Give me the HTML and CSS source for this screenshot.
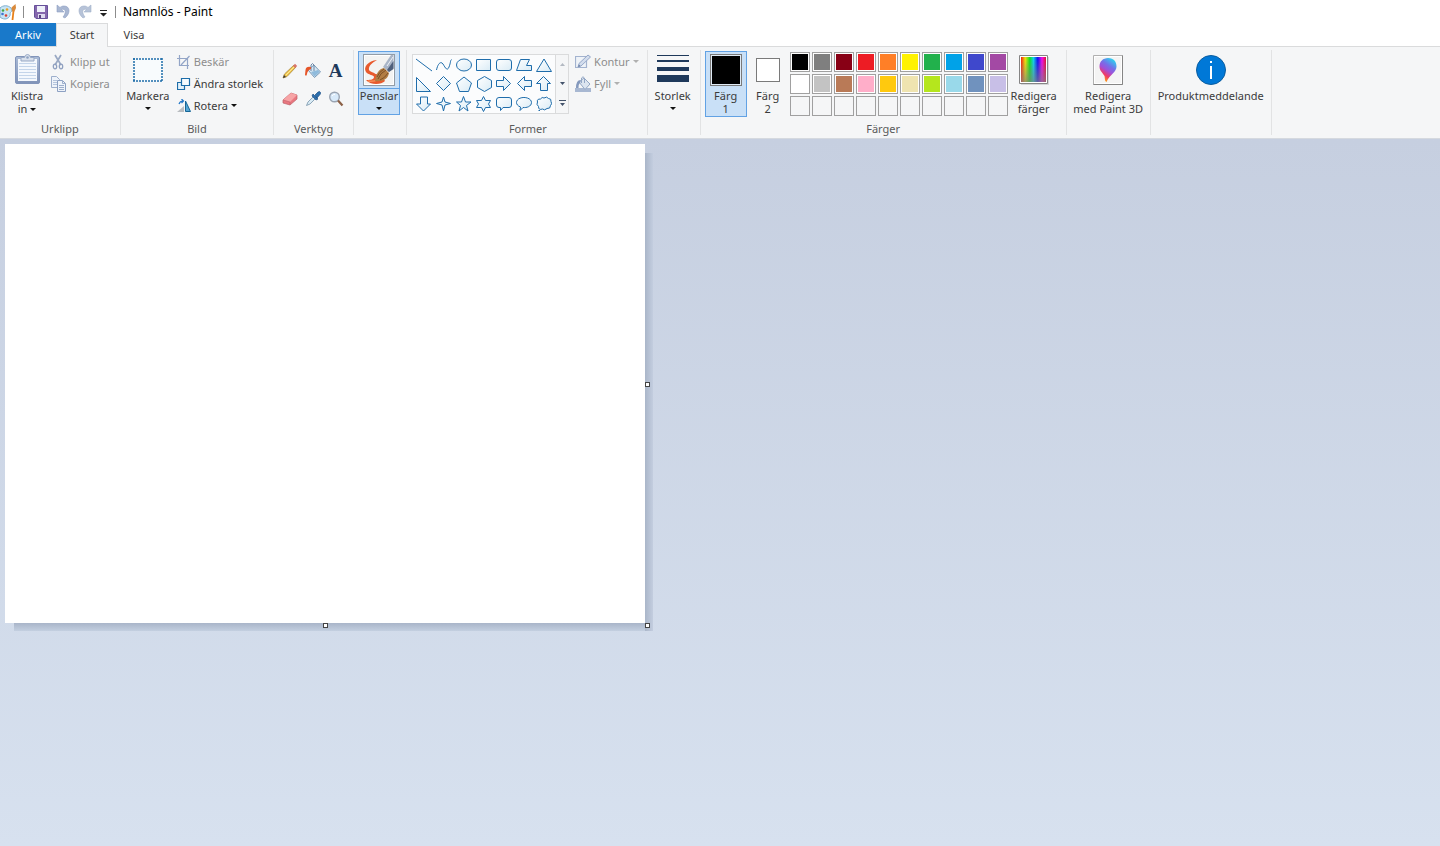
FILE: index.html
```html
<!DOCTYPE html>
<html lang="sv">
<head>
<meta charset="utf-8">
<title>Namnlös - Paint</title>
<link rel="stylesheet" href="styles.css">
</head>
<body>
<svg class="defs" aria-hidden="true">
  <defs>
    <linearGradient id="shapeFill" x1="0" y1="0" x2="1" y2="1"><stop offset="0" stop-color="#fff"/><stop offset="1" stop-color="#d9ebf5"/></linearGradient>
    <linearGradient id="steel" x1="0" y1="0" x2="0" y2="1"><stop offset="0" stop-color="#a9bad6"/><stop offset="1" stop-color="#8093b8"/></linearGradient>
    <linearGradient id="rainbow" x1="0" y1="0" x2="1" y2="0"><stop offset="0" stop-color="#f02010"/><stop offset=".17" stop-color="#f0e010"/><stop offset=".35" stop-color="#10e020"/><stop offset=".5" stop-color="#10d0e8"/><stop offset=".67" stop-color="#1010f0"/><stop offset=".84" stop-color="#f010e8"/><stop offset="1" stop-color="#e01030"/></linearGradient>
    <linearGradient id="greyfade" x1="0" y1="0" x2="0" y2="1"><stop offset=".1" stop-color="#808080" stop-opacity="0"/><stop offset="1" stop-color="#808080" stop-opacity=".7"/></linearGradient>
    <linearGradient id="drop" x1=".8" y1="0" x2=".3" y2="1"><stop offset="0" stop-color="#20e0f0"/><stop offset=".35" stop-color="#7470e8"/><stop offset=".55" stop-color="#a050d8"/><stop offset=".75" stop-color="#f03868"/><stop offset="1" stop-color="#ffb000"/></linearGradient>
  </defs>
</svg>

<header class="titlebar">
  <svg class="app" width="17" height="18" viewBox="0 0 17 18"><path d="M0 5C3 2 8 2 11 5c2 3 0 4-1 5 1 3-2 6-5 6-2 0-4-1-5-2z" fill="#c8e4f4" stroke="#7fb0d0"/><circle cx="3" cy="7.500" r="1.300" fill="#45a648"/><circle cx="7" cy="6.500" r="1.300" fill="#e8a020"/><circle cx="2.500" cy="11" r="1.300" fill="#3f75d0"/><circle cx="6" cy="12.500" r="1.300" fill="#d84030"/><path d="M12.500 17l1-9" stroke="#e88018" stroke-width="1.800" fill="none"/><path d="M12 8.500l-.5-4L15.500 1l.5 4-1.500 3.500z" fill="#d98a3c"/></svg>
  <span class="rule"></span>
  <button class="quick" aria-label="Spara"><svg width="14" height="14" viewBox="0 0 14 14"><path d="M.5.500h13v13H2L.5 12z" fill="#8567ad" stroke="#66509a"/><path d="M3 1h8v6H3z" fill="#eef0fa"/><path d="M4 9h7v4H4z" fill="#ddd9ee"/><path d="M5 10h2v3H5z" fill="#55417e"/></svg></button>
  <button class="quick" aria-label="Ångra"><svg width="14" height="15" viewBox="0 0 14 15"><path d="M1 1v7h7L5.500 5.500C9 4 11 8 7 13l2 1c6-5 5-12-1-12-2 0-3 .6-4 1.500z" fill="#a9b7d2" stroke="#8fa0c3" stroke-width=".6"/></svg></button>
  <button class="quick" aria-label="Gör om"><svg width="14" height="15" viewBox="0 0 14 15"><path d="M13 1v7H6l2.500-2.500C5 4 3 8 7 13l-2 1C-1 9 0 2 6 2c2 0 3 .6 4 1.500z" fill="#b7c3d8" stroke="#a3b1cb" stroke-width=".6"/></svg></button>
  <button class="customize" aria-label="Anpassa verktygsfältet Snabbåtkomst"><svg width="7" height="7" viewBox="0 0 7 7"><path d="M0 0h7v1H0zM0 3h7L3.500 6.500z" fill="#222"/></svg></button>
  <span class="rule"></span>
  <h1 class="title">Namnlös - Paint</h1>
</header>

<nav class="tabs">
  <button class="tab file">Arkiv</button>
  <button class="tab active">Start</button>
  <button class="tab">Visa</button>
</nav>

<div class="ribbon">
  <section class="group">
    <div class="body">
      <button class="big paste"><span class="pic"><svg width="28" height="32" viewBox="-1 0 28 32"><rect x="1.500" y="2.500" width="24" height="27" rx="1.500" fill="url(#steel)" stroke="#8295ba"/><path d="M4 5h19v22H4z" fill="#f4f8fd"/><path d="M5 9.500h17M5 12.500h17M5 15.500h17M5 18.500h17M5 21.500h17M5 24.500h17" stroke="#c4d5ea"/><path d="M7 7V3.500h3.500Q11 .5 13.500.500T16.500 3.500H20V7z" fill="#d8e0ec" stroke="#98a9c5"/><circle cx="13.500" cy="3.500" r="1.300" fill="#8fa3c3"/></svg></span>Klistra<br>in <i class="caret"></i></button>
      <div class="stack">
        <button class="small" disabled><svg width="16" height="16" viewBox="0 0 16 16"><path d="M4 1l6 10M10 1L4 11" stroke="#9aa9c4" stroke-width="1.700"/><ellipse cx="4" cy="12.500" rx="1.700" ry="2.300" fill="none" stroke="#8fa0c0" stroke-width="1.300"/><ellipse cx="10" cy="12.500" rx="1.700" ry="2.300" fill="none" stroke="#8fa0c0" stroke-width="1.300"/></svg>Klipp ut</button>
        <button class="small" disabled><svg width="16" height="16" viewBox="0 0 16 16"><path d="M.5.500h5l3 3v8h-8z" fill="#eef3fa" stroke="#9dafcc"/><path d="M2 4.500h4M2 6.500h4M2 8.500h4" stroke="#b4c4dc"/><path d="M6.500 4.500h5l3 3v8h-8z" fill="#eef3fa" stroke="#8da1c3"/><path d="M11.500 4.500v3h3M8 9.500h5M8 11.500h5M8 13.500h5" fill="none" stroke="#9dafcc"/></svg>Kopiera</button>
      </div>
    </div>
    <h2>Urklipp</h2>
  </section>

  <section class="group">
    <div class="body">
      <button class="big select"><span class="pic"><svg width="30" height="24" viewBox="0 0 30 24"><path d="M0 0h30v24H0z" fill="#f8fbfd"/><path d="M0 1h30M0 23h30M1 0v24M29 0v24" fill="none" stroke="#1c6ca8" stroke-width="1.500" stroke-dasharray="2 1"/></svg></span>Markera<i class="caret below"></i></button>
      <div class="stack">
        <button class="small" disabled><svg width="14" height="14" viewBox="0 0 14 14"><path d="M2.500 0v10.500H12M0 3.500h10.500V14M4 10L12.500 1" fill="none" stroke="#93a5c7" stroke-width="1.200"/></svg>Beskär</button>
        <button class="small"><svg width="14" height="14" viewBox="0 0 14 14"><path d="M.5 5.500h7v7h-7z" fill="#e4f2fb" stroke="#1d6da9" stroke-width="1.200"/><path d="M4.500 1.500h8v7h-8z" fill="#f7fcff" stroke="#1d6da9" stroke-width="1.200"/></svg>Ändra storlek</button>
        <button class="small"><svg width="14" height="14" viewBox="0 0 14 14"><path d="M0 13l7-6v6z" fill="#b9bdc1"/><path d="M8.500 2L13.500 12.500h-5z" fill="#54a5d4" stroke="#166696"/><path d="M2 5q1-3 4-3M4.500 0L6.500 2l-2 2" fill="none" stroke="#2377c8" stroke-width="1.200"/></svg>Rotera <i class="caret"></i></button>
      </div>
    </div>
    <h2>Bild</h2>
  </section>

  <section class="group">
    <div class="body tools">
      <button aria-label="Penna"><svg width="16" height="16" viewBox="0 0 16 16"><path d="M1 15l1.500-4L12 2l2 2-9 9.500z" fill="#f2c84b" stroke="#a98640" stroke-width=".8"/><path d="M11 3l2-2.200 2.200 2.200L13 5z" fill="#d8746a"/><path d="M1 15l1-3 2 2z" fill="#3c3c3c"/><path d="M4 12l8-8" stroke="#fbe69b"/></svg></button>
      <button aria-label="Fyll med färg"><svg width="18" height="16" viewBox="0 0 18 16"><path d="M4 7l6-5 6.500 7-6 5.500z" fill="#d6e6f2" stroke="#7799b8"/><path d="M7 9l7-2 1.500 2-5 4.500z" fill="#8fbbdc"/><path d="M7 8V2q1.500-3 3 0v6" fill="none" stroke="#6b87a8"/><path d="M7 4Q2 3 1.500 7L1 12q1.500 2 2-1 .5-4 4-5z" fill="#e65529"/></svg></button>
      <button class="letter" aria-label="Text">A</button>
      <button aria-label="Suddgummi"><svg width="16" height="14" viewBox="0 0 16 14"><path d="M1 8L9 1l6 2v4l-7 6-7-2z" fill="#e97780" stroke="#bd6168" stroke-width=".7"/><path d="M1 8l8-7 6 2-7 7z" fill="#f7a4a6"/><path d="M1 8l7 2v3" fill="none" stroke="#c9656e" stroke-width=".7"/></svg></button>
      <button aria-label="Färgväljare"><svg width="16" height="16" viewBox="0 0 16 16"><path d="M1.500 14.500L3 11l6-6 2 2-6 6z" fill="#d9ebf5" stroke="#7693aa" stroke-width=".8"/><path d="M8 3l5 5-2 1-4-4zM10 4l3-3q2-1 2.500.5T15 3.500L12 7z" fill="#2b6fae" stroke="#1d4f85" stroke-width=".7"/></svg></button>
      <button aria-label="Förstoringsglas"><svg width="16" height="16" viewBox="0 0 16 16"><circle cx="6.500" cy="6" r="4.800" fill="#d8eafa" stroke="#9aa4b2" stroke-width="1.400"/><path d="M10 9.500l4.500 5" stroke="#8b6046" stroke-width="2.200"/><path d="M4 5q1-2 3-1.500" fill="none" stroke="#fff"/></svg></button>
    </div>
    <h2>Verktyg</h2>
  </section>

  <section class="group">
    <div class="body">
      <button class="big brushes on"><span class="pic"><svg width="32" height="32" viewBox="0 0 32 32"><rect x=".5" y=".5" width="31" height="31" fill="#f3f3f2" stroke="#929ca6"/><path d="M1.500 1.500h29v29h-29z" fill="none" stroke="#fff"/><path d="M14 6C5 7 0 13 3 18c2 3 8 3 8 5 0 3-5 3-8 3 4 5 15 5 19 1l-5-8c-3 1-3 2-6 0-2-1-6-2-5-5 1-4 5-6 8-8z" fill="#e85a2d"/><path d="M5 27q9 1 13-4" stroke="#f58a55" fill="none" stroke-width="1.500"/><path d="M20 13L28 1h2.500v13L26 18z" fill="#a9b5c7"/><path d="M24 16l6.500-9v8L26 18z" fill="#4e607d"/><path d="M24 12l6-9" stroke="#eef2f8"/><path d="M12 27c1-8 4-12 9-13l5 5c-1 6-6 9-14 8z" fill="#b17d43"/><path d="M15 25q2-6 8-9M17 26q5-2 8-7M14 23q2-5 7-8" stroke="#7d5127" fill="none"/></svg></span>Penslar<i class="caret below"></i></button>
    </div>
  </section>

  <section class="group forms">
    <div class="body">
      <div class="gallery">
        <div class="shapes">
          <button aria-label="Linje"><svg viewBox="0 0 16 16"><path d="M0 2l16 12"/></svg></button>
          <button aria-label="Kurva"><svg viewBox="0 0 16 16"><path class="open" d="M.5 13C2 6 5 4 7 7s4 8 6 3 1-6 2.500-7.500"/></svg></button>
          <button aria-label="Ellips"><svg viewBox="0 0 16 16"><ellipse cx="8" cy="8" rx="7.500" ry="6"/></svg></button>
          <button aria-label="Rektangel"><svg viewBox="0 0 16 16"><path d="M.5 2.500h14v11H.5z"/></svg></button>
          <button aria-label="Rundad rektangel"><svg viewBox="0 0 16 16"><rect x=".5" y="2.500" width="15" height="11" rx="2.500"/></svg></button>
          <button aria-label="Polygon"><svg viewBox="0 0 16 16"><path d="M4.500 2.500h9l-3 6h5v5H.5z"/></svg></button>
          <button aria-label="Triangel"><svg viewBox="0 0 16 16"><path d="M8 2l7.500 12.500H.5z"/></svg></button>
          <button aria-label="Rätvinklig triangel"><svg viewBox="0 0 16 16"><path d="M.5 1.500l14 14H.5z"/></svg></button>
          <button aria-label="Romb"><svg viewBox="0 0 16 16"><path d="M7.500.500l7 7-7 7-7-7z"/></svg></button>
          <button aria-label="Femhörning"><svg viewBox="0 0 16 16"><path d="M8 1l7.500 6-3 8.500h-9L.5 7z"/></svg></button>
          <button aria-label="Sexhörning"><svg viewBox="0 0 16 16"><path d="M8.500.500l7 4v7l-7 4-7-4v-7z"/></svg></button>
          <button aria-label="Högerpil"><svg viewBox="0 0 16 16"><path d="M.5 4.500h7v-4l7 7-7 7v-4h-7z"/></svg></button>
          <button aria-label="Vänsterpil"><svg viewBox="0 0 16 16"><path d="M15.500 4.500h-7v-4l-7 7 7 7v-4h7z"/></svg></button>
          <button aria-label="Uppåtpil"><svg viewBox="0 0 16 16"><path d="M7.500.500l7 7h-3v7h-7v-7h-4z"/></svg></button>
          <button aria-label="Nedåtpil"><svg viewBox="0 0 16 16"><path d="M7.500 15l7-7h-3V1h-7v7h-4z"/></svg></button>
          <button aria-label="Fyruddig stjärna"><svg viewBox="0 0 16 16"><path d="M7.500 1l1.500 5 5.500 1.500L9 9l-1.500 6L6 9 .5 7.500 6 6z"/></svg></button>
          <button aria-label="Femuddig stjärna"><svg viewBox="0 0 16 16"><path d="M7.500.500l2 5.500h5.500L10.500 9.500 12 15l-4.500-3.500L3 15l1.500-5.500L.5 6h5z"/></svg></button>
          <button aria-label="Sexuddig stjärna"><svg viewBox="0 0 16 16"><path d="M7.500.500l2 4h5l-2 3.500 2 3.500h-5l-2 4-2-4h-5l2-3.500-2-3.500h5z"/></svg></button>
          <button aria-label="Rundad rektangulär pratbubbla"><svg viewBox="0 0 16 16"><path d="M3 1.500h10q2.500 0 2.500 2.500v5q0 2.500-2.500 2.500H7L4.500 14.500v-3H3Q.5 11.500.5 9V4Q.5 1.500 3 1.500z"/></svg></button>
          <button aria-label="Oval pratbubbla"><svg viewBox="0 0 16 16"><path d="M4.500 11C-1 9-.5 4 4 2.200c5-2 11.500.3 11.500 4.300s-5 5.500-8.500 5L4 14.500z"/></svg></button>
          <button aria-label="Molnbubbla"><svg viewBox="0 0 16 16"><path d="M4.500 3Q6 .5 8 2q3-2 4.500.5 3 0 2.500 3 1.500 2.500-.5 4 0 3.500-3.500 3-2.500 2.500-4.500.5-4 1.500-4-2.500-2.500-2-1-4.500Q.5 3 4.500 3zM2.500 14.500h1.500"/></svg></button>
        </div>
        <div class="scroller">
          <button aria-label="Rulla upp" disabled><svg width="5" height="3" viewBox="0 0 5 3"><path d="M2.500 0L5 3H0z"/></svg></button>
          <button aria-label="Rulla ned"><svg width="5" height="3" viewBox="0 0 5 3"><path d="M0 0h5L2.500 3z"/></svg></button>
          <button aria-label="Fler former"><svg width="7" height="7" viewBox="0 0 7 7"><path d="M0 0h7v1H0zM1 3h5L3.500 6z"/></svg></button>
        </div>
      </div>
      <div class="stack">
        <button class="small" disabled><svg width="16" height="16" viewBox="0 0 16 16"><path d="M.5 2.500h11v11H.5z" fill="#eff3f8" stroke="#a3b3cf" stroke-width="1.200"/><path d="M3 13l1-3.500L13 1l2.500 2L6 12z" fill="#d3dded" stroke="#95a8c8"/><path d="M3 13l1-2.500L5.500 12z" fill="#6e82a8"/></svg>Kontur <i class="caret"></i></button>
        <button class="small" disabled><svg width="16" height="16" viewBox="0 0 16 16"><path d="M0 12h16v4H0z" fill="#a8b8d2"/><path d="M4 6l5-4 6 6-5 5.500z" fill="#dce5f0" stroke="#93a7c5"/><path d="M6.500 7V2q1.500-2.500 3 0v5" fill="none" stroke="#93a7c5"/><path d="M5.500 4Q1 4 1 12h2.500q0-4 2-6z" fill="#8499bd"/></svg>Fyll <i class="caret"></i></button>
      </div>
    </div>
    <h2>Former</h2>
  </section>

  <section class="group">
    <div class="body">
      <button class="big size"><span class="pic"><svg width="32" height="32" viewBox="0 0 32 32"><path d="M0 1h32v1H0zM0 6h32v2H0zM0 13h32v4H0zM0 21h32v7H0z" fill="#1e395b"/></svg></span>Storlek<i class="caret below"></i></button>
    </div>
  </section>

  <section class="group">
    <div class="body colors">
      <button class="big color on"><span class="pic"><span class="well black"></span></span>Färg<br>1</button>
      <button class="big color"><span class="pic"><span class="well white"></span></span>Färg<br>2</button>
      <div class="palette">
        <button class="swatch c-black" aria-label="Svart"></button><button class="swatch c-grey" aria-label="Grå"></button><button class="swatch c-darkred" aria-label="Mörkröd"></button><button class="swatch c-red" aria-label="Röd"></button><button class="swatch c-orange" aria-label="Orange"></button><button class="swatch c-yellow" aria-label="Gul"></button><button class="swatch c-green" aria-label="Grön"></button><button class="swatch c-turquoise" aria-label="Turkos"></button><button class="swatch c-indigo" aria-label="Indigo"></button><button class="swatch c-purple" aria-label="Lila"></button>
        <button class="swatch c-white" aria-label="Vit"></button><button class="swatch c-lightgrey" aria-label="Ljusgrå"></button><button class="swatch c-brown" aria-label="Brun"></button><button class="swatch c-rose" aria-label="Rosa"></button><button class="swatch c-gold" aria-label="Guld"></button><button class="swatch c-cream" aria-label="Ljusgul"></button><button class="swatch c-lime" aria-label="Lime"></button><button class="swatch c-sky" aria-label="Ljusturkos"></button><button class="swatch c-bluegrey" aria-label="Blågrå"></button><button class="swatch c-lavender" aria-label="Lavendel"></button>
        <button class="swatch" aria-label="Tom 1"></button><button class="swatch" aria-label="Tom 2"></button><button class="swatch" aria-label="Tom 3"></button><button class="swatch" aria-label="Tom 4"></button><button class="swatch" aria-label="Tom 5"></button><button class="swatch" aria-label="Tom 6"></button><button class="swatch" aria-label="Tom 7"></button><button class="swatch" aria-label="Tom 8"></button><button class="swatch" aria-label="Tom 9"></button><button class="swatch" aria-label="Tom 10"></button>
      </div>
      <button class="big edit"><span class="pic"><svg width="30" height="30" viewBox="0 0 30 30"><path d="M2 2h28v28H2z" fill="#d5d6d8"/><path d="M.5.500h28v28H.5z" fill="#fff" stroke="#858585"/><path d="M2 2h25v25H2z" fill="url(#rainbow)"/><path d="M2 2h25v25H2z" fill="url(#greyfade)"/></svg></span>Redigera<br>färger</button>
    </div>
    <h2>Färger</h2>
  </section>

  <section class="group">
    <div class="body">
      <button class="big paint3d"><span class="pic"><svg width="30" height="30" viewBox="0 0 30 30"><path d="M.5.500h29v29H.5z" fill="#f4f4f4" stroke="#b0b0b0"/><path d="M1.500 1.500h27v27h-27z" fill="none" stroke="#fff"/><path d="M.5 29.500h29V.5" fill="none" stroke="#858585"/><path d="M15 3c6 0 8.500 4 8.500 8.500 0 6-6.500 7.500-10 15.500-2-1-1.500-4-2-6C10 18 6.500 16 6.500 11.500 6.500 6.500 10 3 15 3z" fill="url(#drop)"/></svg></span>Redigera<br>med Paint 3D</button>
    </div>
  </section>

  <section class="group">
    <div class="body">
      <button class="big notice"><span class="pic"><svg width="30" height="30" viewBox="0 0 30 30"><circle cx="15" cy="15" r="14.500" fill="#0078d7" stroke="#0b5d9f"/><path d="M14 11h2v13h-2zM14 6h2v2h-2z" fill="#fff"/></svg></span>Produktmeddelande</button>
    </div>
  </section>
</div>

<main class="workspace">
  <div class="sheet">
    <canvas class="paper" width="640" height="479" aria-label="Rityta"></canvas>
    <span class="shade right"></span>
    <span class="shade bottom"></span>
    <span class="handle east"></span>
    <span class="handle south"></span>
    <span class="handle corner"></span>
  </div>
</main>
</body>
</html>
```
FILE: styles.css
```css
* { box-sizing: border-box; }

body {
  margin: 0;
  min-height: 100vh;
  display: flex;
  flex-direction: column;
  background: #fff;
  color: #3b3b3b;
  font: 11px/13px "Noto Sans", "Open Sans", sans-serif;
}

button {
  margin: 0;
  padding: 0;
  border: 0;
  background: none;
  color: inherit;
  font: inherit;
}

svg { display: block; flex: none; }
.defs { position: absolute; width: 0; height: 0; }

.titlebar {
  display: flex;
  align-items: center;
  height: 23px;
}
.rule { width: 1px; height: 12px; margin: 0 10px 0 6px; background: #8c8c8c; }
.quick { width: 14px; margin-right: 8px; }
.customize { padding: 3px 1px 0 0; }
.customize + .rule { margin: 0 7px; }
.title { margin: 0; color: #000; font-size: 12px; font-weight: 400; }

.tabs { display: flex; height: 23px; }
.tab { width: 52px; padding-bottom: 2px; border: 1px solid transparent; border-bottom: 0; }
.tab.file { width: 56px; background: #1979ca; color: #fff; }
.tab.active {
  height: 24px;
  padding-bottom: 3px;
  border-color: #dadbdc;
  background: #f5f6f7;
  z-index: 1;
  position: relative;
}

.ribbon {
  display: flex;
  padding: 3px 0;
  border-top: 1px solid #dadbdc;
  border-bottom: 1px solid #d5d9df;
  background: #f5f6f7;
}
.group {
  display: flex;
  flex-direction: column;
  padding: 0 4px;
  border-right: 1px solid #e2e3e4;
}
.forms { padding-right: 2px; }
.body { display: flex; height: 72px; padding-top: 1px; }
.group h2 {
  margin: 0;
  color: #5a5a5a;
  font-size: 11px;
  font-weight: 400;
  text-align: center;
}

.big {
  display: flow-root;
  align-self: flex-start;
  padding: 2px 0 1px;
  border: 1px solid transparent;
  text-align: center;
  white-space: nowrap;
}
.pic {
  display: flex;
  align-items: center;
  justify-content: center;
  height: 32px;
  margin-bottom: 3px;
}
.caret {
  display: inline-block;
  vertical-align: 2px;
  border: 3px solid transparent;
  border-top-color: currentColor;
  border-bottom: 0;
}
.caret.below { display: block; width: 6px; margin: 5px auto 0; }
.big .caret { color: #111; }
.on { border-color: #62a2e4; background: #c9e0f7; }

.paste { width: 46px; }
.select { width: 46px; margin-right: 5px; }
.select { overflow: visible; }
.brushes { width: 42px; margin-right: 2px; padding-bottom: 4px; }
.brushes .pic { align-items: flex-start; height: 35px; margin: 0; border-bottom: 1px solid #62a2e4; }
.size { width: 42px; margin-right: 2px; }
.color { width: 42px; }
.edit { width: 52px; margin-right: 2px; }
.paint3d { width: 75px; }
.notice { width: 112px; }

.stack { display: flex; flex-direction: column; }
.small {
  display: flex;
  align-items: center;
  gap: 3px;
  height: 22px;
  padding: 0 6px 2px 1px;
  white-space: nowrap;
}
.small svg { margin-top: 2px; }
.small .caret { color: #111; }
.small:disabled { color: #8d8d8d; }
.small:disabled .caret { color: #b0b0b0; }

.tools {
  display: grid;
  grid-template-columns: repeat(3, 23px);
  grid-auto-rows: 28px;
  padding: 7px 2px 0 0;
}
.tools button { display: grid; place-items: center; }
.tools .letter { color: #1e395b; font: bold 19px/18px "Liberation Serif", serif; }

.gallery {
  display: flex;
  align-self: flex-start;
  margin: 3px 5px 0 1px;
  border: 1px solid #dadbdc;
}
.shapes {
  display: grid;
  grid-template-columns: repeat(7, 20px);
  grid-template-rows: 19px 20px 19px;
  padding: 0 1px;
  background: #fbfcfd;
}
.shapes button { display: grid; place-items: center; }
.shapes svg {
  width: 16px;
  height: 16px;
  fill: url(#shapeFill);
  stroke: #1f6dab;
}
.shapes .open { fill: none; }
.scroller {
  display: grid;
  grid-template-rows: repeat(3, 1fr);
  width: 13px;
  border-left: 1px solid #dadbdc;
}
.scroller button { display: grid; place-items: center; }
.scroller svg { fill: #43536b; }
.scroller :disabled svg { fill: #b3b9c2; }

.well { border: 1px solid #7a7a7a; }
.black { width: 32px; height: 32px; background: #000; box-shadow: inset 0 0 0 1px #dfeaf5; }
.white { width: 24px; height: 24px; background: #fff; }
.palette {
  display: grid;
  grid-template-columns: repeat(10, 20px);
  grid-auto-rows: 20px;
  gap: 2px;
  align-self: flex-start;
  margin: 1px 0 0 1px;
}
.swatch { padding: 1px; border: 1px solid #a0a0a0; background-clip: content-box; }
.c-black { background-color: #000; }
.c-grey { background-color: #7f7f7f; }
.c-darkred { background-color: #880015; }
.c-red { background-color: #ed1c24; }
.c-orange { background-color: #ff7f27; }
.c-yellow { background-color: #fff200; }
.c-green { background-color: #22b14c; }
.c-turquoise { background-color: #00a2e8; }
.c-indigo { background-color: #3f48cc; }
.c-purple { background-color: #a349a4; }
.c-white { background-color: #fff; }
.c-lightgrey { background-color: #c3c3c3; }
.c-brown { background-color: #b97a57; }
.c-rose { background-color: #ffaec9; }
.c-gold { background-color: #ffc90e; }
.c-cream { background-color: #efe4b0; }
.c-lime { background-color: #b5e61d; }
.c-sky { background-color: #99d9ea; }
.c-bluegrey { background-color: #7092be; }
.c-lavender { background-color: #c8bfe7; }
.swatch[class*="c-"] { box-shadow: inset 0 0 0 1px #fff; }

.workspace {
  flex: 1;
  padding: 5px;
  background: linear-gradient(#c6cfe0, #d7e1ef);
}
.sheet { position: relative; width: fit-content; }
.paper { display: block; background: #fff; }
.shade { position: absolute; }
.shade.right {
  top: 9px;
  left: 100%;
  bottom: -8px;
  width: 8px;
  background: linear-gradient(to right, #aab6c9, #c3cddf);
}
.shade.bottom {
  top: 100%;
  left: 9px;
  right: 0;
  height: 8px;
  background: linear-gradient(#a9b5c9, #c3cfe0);
}
.handle {
  position: absolute;
  width: 5px;
  height: 5px;
  border: 1px solid #444;
  background: #fff;
}
.east { top: 238px; left: 100%; }
.south { top: 100%; left: 318px; }
.corner { top: 100%; left: 100%; }
```
